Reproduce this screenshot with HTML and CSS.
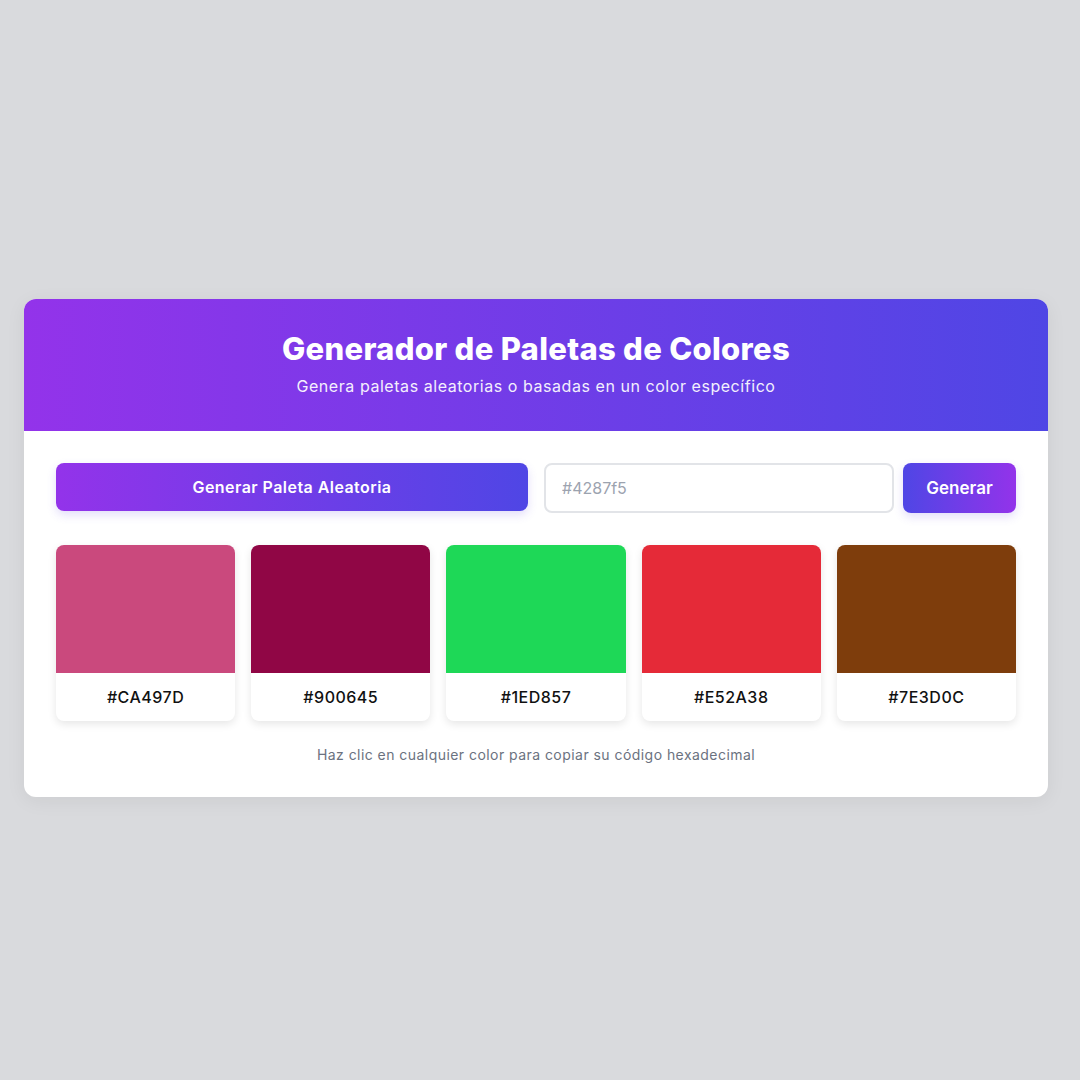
FILE: index.html
```html
<!DOCTYPE html>
<html lang="es">
<head>
    <meta charset="UTF-8">
    <meta name="viewport" content="width=device-width, initial-scale=1.0">
    <title>Generador de Paletas de Colores</title>
    <link rel="stylesheet" href="styles.css">
</head>
<body>
    <div class="container">
        <header class="header">
            <h1>Generador de Paletas de Colores</h1>
            <p>Genera paletas aleatorias o basadas en un color específico</p>
        </header>
        <main class="content">
            <div class="controls">
                <button class="random-button">Generar Paleta Aleatoria</button>
                <div class="base-color">
                    <input type="text" class="color-input" placeholder="#4287f5">
                    <button class="generate-button">Generar</button>
                </div>
            </div>
            <div class="palette">
                <div class="color-card">
                    <div class="swatch" style="background: #CA497D"></div>
                    <div class="hex">#CA497D</div>
                </div>
                <div class="color-card">
                    <div class="swatch" style="background: #900645"></div>
                    <div class="hex">#900645</div>
                </div>
                <div class="color-card">
                    <div class="swatch" style="background: #1ED857"></div>
                    <div class="hex">#1ED857</div>
                </div>
                <div class="color-card">
                    <div class="swatch" style="background: #E52A38"></div>
                    <div class="hex">#E52A38</div>
                </div>
                <div class="color-card">
                    <div class="swatch" style="background: #7E3D0C"></div>
                    <div class="hex">#7E3D0C</div>
                </div>
            </div>
            <p class="hint">Haz clic en cualquier color para copiar su código hexadecimal</p>
        </main>
    </div>
</body>
</html>
```

FILE: styles.css
```css
:root {
    --purple: #9333ea;
    --indigo: #4f46e5;
    --page-bg: #d9dadd;
    --text-color: #111;
    --muted: #6b7280;
    --border-color: #e2e4e8;
}
* {
    box-sizing: border-box;
}
body {
    margin: 0;
    min-height: 100vh;
    padding: 299px 32px 0 24px;
    background: var(--page-bg);
    font-family: Inter, "Open Sans", sans-serif;
    color: var(--text-color);
}
.container {
    width: 1024px;
    background: #fff;
    border-radius: 12px;
    overflow: hidden;
    box-shadow: 0 4px 20px rgba(0, 0, 0, 0.06);
}
.header {
    height: 132px;
    padding-top: 31px;
    text-align: center;
    color: #fff;
    background: linear-gradient(90deg, var(--purple), var(--indigo));
}
.header h1 {
    margin: 0;
    font-size: 31px;
    font-weight: 800;
    letter-spacing: 0.3px;
    line-height: 38px;
}
.header p {
    margin: 8px 0 0;
    font-size: 16px;
    line-height: 20px;
    letter-spacing: 0.55px;
    opacity: 0.92;
}
.content {
    padding: 32px 32px 33px;
}
.controls {
    display: grid;
    grid-template-columns: 1fr 1fr;
    gap: 16px;
}
.random-button,
.generate-button {
    border: none;
    border-radius: 8px;
    color: #fff;
    font-family: inherit;
    font-size: 16px;
    font-weight: 600;
    cursor: pointer;
    box-shadow: 0 4px 10px rgba(99, 70, 230, 0.18);
}
.random-button {
    height: 48px;
    letter-spacing: 0.45px;
    background: linear-gradient(90deg, var(--purple), var(--indigo));
}
.base-color {
    display: flex;
    gap: 9px;
}
.color-input {
    flex: 1;
    min-width: 0;
    height: 50px;
    padding: 0 16px;
    border: 2px solid var(--border-color);
    border-radius: 8px;
    font-family: inherit;
    font-size: 16px;
    color: var(--text-color);
}
.color-input::placeholder {
    color: #9ca3af;
}
.generate-button {
    width: 113px;
    height: 50px;
    font-size: 17px;
    background: linear-gradient(90deg, var(--indigo), var(--purple));
}
.palette {
    display: grid;
    grid-template-columns: repeat(5, 1fr);
    gap: 16px;
    margin-top: 32px;
}
.color-card {
    border-radius: 8px;
    overflow: hidden;
    background: #fff;
    box-shadow: 0 3px 8px rgba(0, 0, 0, 0.1);
    cursor: pointer;
}
.swatch {
    height: 128px;
}
.hex {
    height: 48px;
    display: flex;
    align-items: center;
    justify-content: center;
    font-size: 16px;
    font-weight: 500;
    letter-spacing: 0.5px;
}
.hint {
    margin: 25px 0 0;
    text-align: center;
    font-size: 14px;
    line-height: 18px;
    letter-spacing: 0.45px;
    color: var(--muted);
}
```
